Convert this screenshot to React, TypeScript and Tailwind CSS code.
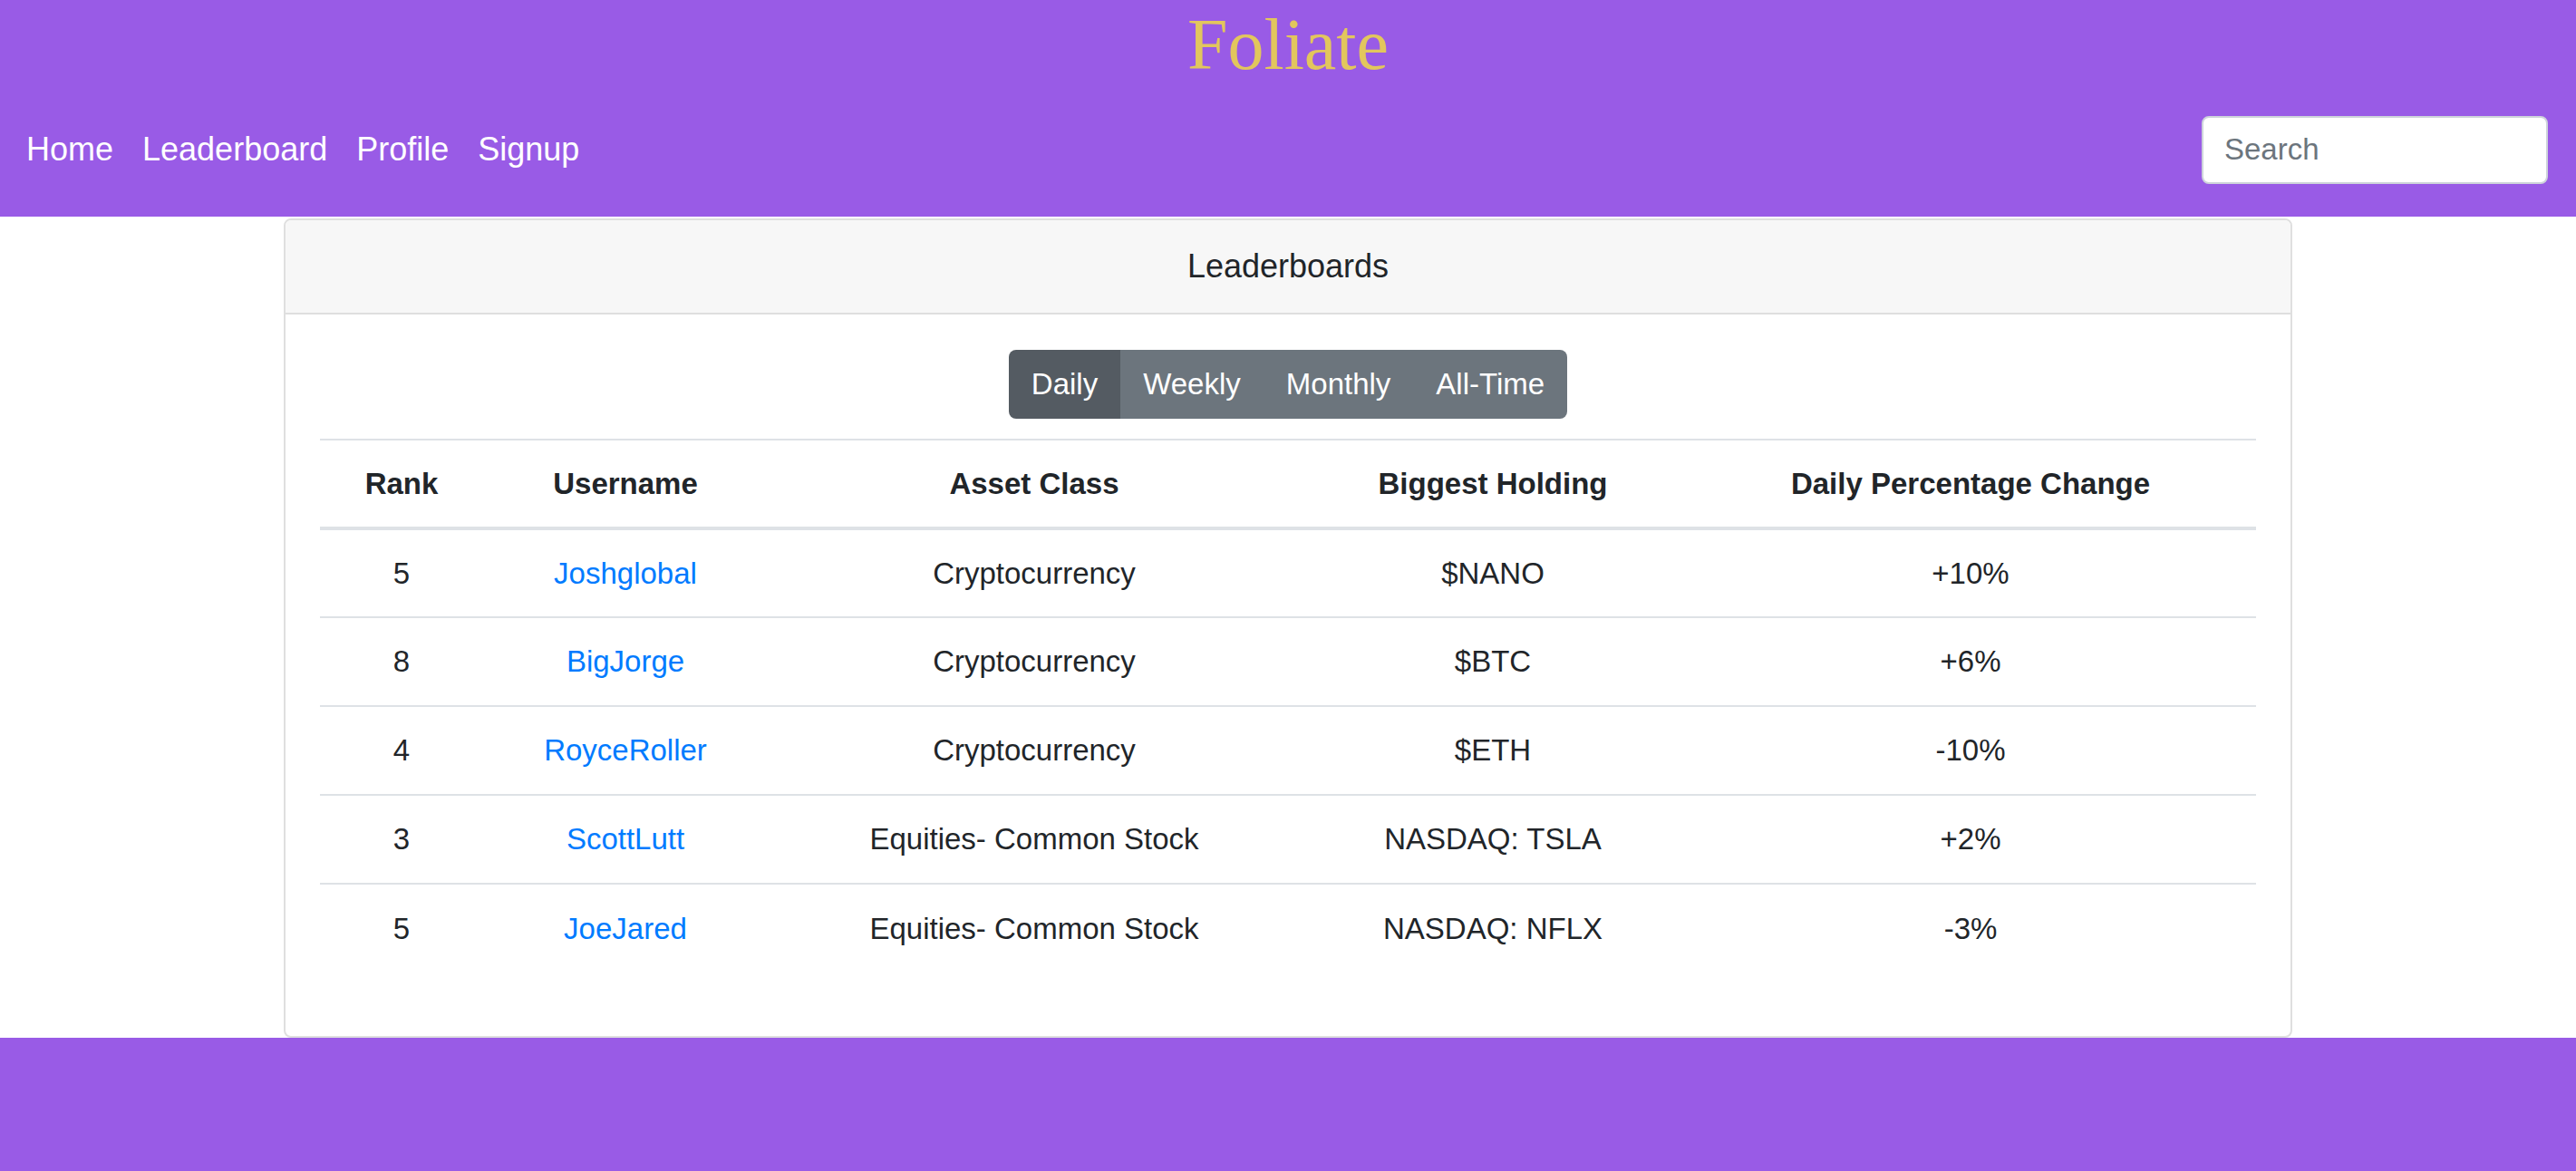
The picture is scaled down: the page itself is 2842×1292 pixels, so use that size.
const rows = [
  { rank: 5, user: "Joshglobal", asset: "Cryptocurrency", holding: "$NANO", change: "+10%" },
  { rank: 8, user: "BigJorge", asset: "Cryptocurrency", holding: "$BTC", change: "+6%" },
  { rank: 4, user: "RoyceRoller", asset: "Cryptocurrency", holding: "$ETH", change: "-10%" },
  { rank: 3, user: "ScottLutt", asset: "Equities- Common Stock", holding: "NASDAQ: TSLA", change: "+2%" },
  { rank: 5, user: "JoeJared", asset: "Equities- Common Stock", holding: "NASDAQ: NFLX", change: "-3%" },
];

const tabs = ["Daily", "Weekly", "Monthly", "All-Time"];

export default function App() {
  return (
    <div className="flex flex-col min-h-[1292px] bg-white font-['Liberation_Sans',Arial,sans-serif] text-[#212529]">
      {/* top bar */}
      <header className="flex flex-col h-[239px] bg-[#995be6]">
        <h1 className="text-center text-[80px] leading-[98px] text-[#e2c65d] font-['Liberation_Serif','Times_New_Roman',serif]">
          Foliate
        </h1>
        <nav className="flex flex-row items-center justify-between h-[134px] pl-[13px] pr-[31px]">
          <div className="flex flex-row">
            {["Home", "Leaderboard", "Profile", "Signup"].map((l) => (
              <a key={l} href="#" className="px-[16px] text-[36px] leading-[54px] text-white">
                {l}
              </a>
            ))}
          </div>
          <input
            type="text"
            placeholder="Search"
            className="w-[382px] h-[75px] rounded-[8px] border-2 border-[#ced4da] bg-white px-[23px] text-[33px] text-[#495057] placeholder:text-[#6c757d] outline-none"
          />
        </nav>
      </header>

      {/* leaderboard card */}
      <main className="flex justify-center pt-[2px]">
        <div className="w-[2216px] border-2 border-[#dfdfdf] rounded-[8px] overflow-hidden">
          <div className="flex items-center justify-center h-[104px] bg-[#f7f7f7] border-b-2 border-[#dfdfdf] text-[36px]">
            Leaderboards
          </div>
          <div className="flex flex-col px-[38px] pt-[39px] pb-[38px]">
            <div className="flex justify-center mb-[22px]">
              <div className="flex flex-row h-[76px] rounded-[8px] overflow-hidden">
                {tabs.map((t, i) => (
                  <button
                    key={t}
                    className={
                      i === 0
                        ? "px-[25px] text-[33px] text-white bg-[#545b62]"
                        : "px-[25px] text-[33px] text-white bg-[#6c757d]"
                    }
                  >
                    {t}
                  </button>
                ))}
              </div>
            </div>
            <table className="w-full border-collapse text-[33px] mb-[32px]">
              <thead>
                <tr className="border-t-2 border-b-4 border-[#dee2e6]">
                  <th className="w-[180px] h-[98px] font-bold text-center">Rank</th>
                  <th className="w-[314px] font-bold text-center">Username</th>
                  <th className="w-[588px] font-bold text-center">Asset Class</th>
                  <th className="w-[424px] font-bold text-center">Biggest Holding</th>
                  <th className="font-bold text-center">Daily Percentage Change</th>
                </tr>
              </thead>
              <tbody>
                {rows.map((r, i) => (
                  <tr key={r.user} className={i === 0 ? "" : "border-t-2 border-[#dee2e6]"}>
                    <td className="h-[98px] text-center">{r.rank}</td>
                    <td className="text-center">
                      <a href="#" className="text-[#007bff]">
                        {r.user}
                      </a>
                    </td>
                    <td className="text-center">{r.asset}</td>
                    <td className="text-center">{r.holding}</td>
                    <td className="text-center">{r.change}</td>
                  </tr>
                ))}
              </tbody>
            </table>
          </div>
        </div>
      </main>

      <footer className="flex-1 bg-[#995be6]" />
    </div>
  );
}
